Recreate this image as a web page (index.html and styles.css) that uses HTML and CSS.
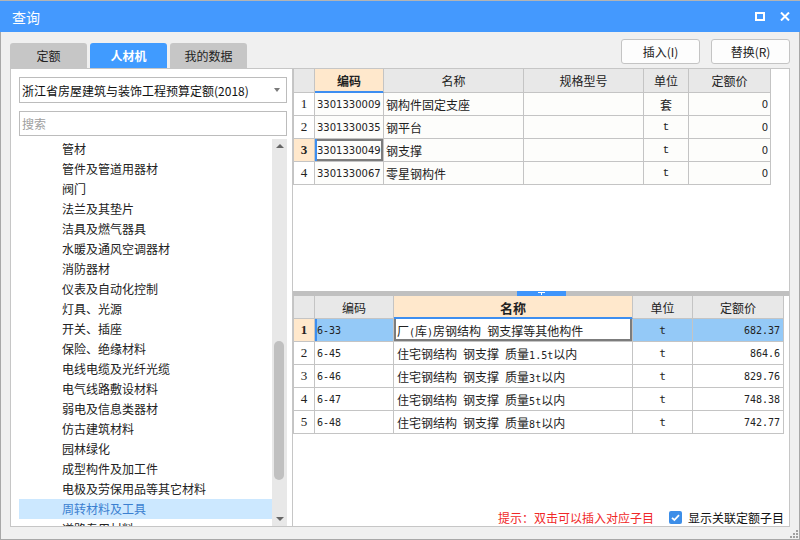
FILE: index.html
```html
<!DOCTYPE html>
<html>
<head>
<meta charset="utf-8">
<title>查询</title>
<link rel="stylesheet" href="styles.css">
</head>
<body>
<div class="win">
  <div class="titlebar">
    <span class="title">查询</span>
    <span class="tb-icons">
      <svg width="10" height="9" viewBox="0 0 10 9"><rect x="1" y="1" width="8" height="7" fill="none" stroke="#fff" stroke-width="2"/></svg>
      <svg width="10" height="9" viewBox="0 0 10 9"><path d="M1 0.5 L9 8.5 M9 0.5 L1 8.5" stroke="#fff" stroke-width="2" fill="none"/></svg>
    </span>
  </div>
  <div class="body">
    <div class="toolbar">
      <div class="tabs">
        <div class="tab">定额</div>
        <div class="tab active">人材机</div>
        <div class="tab">我的数据</div>
      </div>
      <div class="buttons">
        <button class="btn">插入(I)</button>
        <button class="btn">替换(R)</button>
      </div>
    </div>
    <div class="main">
      <div class="left">
        <div class="select"><span class="select-text">浙江省房屋建筑与装饰工程预算定额(2018)</span><span class="caret"></span></div>
        <div class="search">搜索</div>
        <div class="tree">
          <div class="items">
            <div class="item">管材</div>
            <div class="item">管件及管道用器材</div>
            <div class="item">阀门</div>
            <div class="item">法兰及其垫片</div>
            <div class="item">洁具及燃气器具</div>
            <div class="item">水暖及通风空调器材</div>
            <div class="item">消防器材</div>
            <div class="item">仪表及自动化控制</div>
            <div class="item">灯具、光源</div>
            <div class="item">开关、插座</div>
            <div class="item">保险、绝缘材料</div>
            <div class="item">电线电缆及光纤光缆</div>
            <div class="item">电气线路敷设材料</div>
            <div class="item">弱电及信息类器材</div>
            <div class="item">仿古建筑材料</div>
            <div class="item">园林绿化</div>
            <div class="item">成型构件及加工件</div>
            <div class="item">电极及劳保用品等其它材料</div>
            <div class="item sel">周转材料及工具</div>
            <div class="item">道路专用材料</div>
          </div>
          <div class="vscroll">
            <div class="arrow"><span class="tri-up"></span></div>
            <div class="track"><div class="thumb"></div></div>
            <div class="arrow"><span class="tri-down"></span></div>
          </div>
        </div>
      </div>
      <div class="right">
        <div class="top-area">
          <div class="grid g1">
            <div class="c hd"></div>
            <div class="c hd peach bold cur-col">编码</div>
            <div class="c hd">名称</div>
            <div class="c hd">规格型号</div>
            <div class="c hd">单位</div>
            <div class="c hd">定额价</div>

            <div class="c num">1</div>
            <div class="c code">3301330009</div>
            <div class="c name">钢构件固定支座</div>
            <div class="c"></div>
            <div class="c unit">套</div>
            <div class="c price">0</div>

            <div class="c num">2</div>
            <div class="c code">3301330035</div>
            <div class="c name">钢平台</div>
            <div class="c"></div>
            <div class="c unit mono">t</div>
            <div class="c price">0</div>

            <div class="c num peach bold">3</div>
            <div class="c code focus-row">3301330049</div>
            <div class="c name">钢支撑</div>
            <div class="c"></div>
            <div class="c unit mono">t</div>
            <div class="c price">0</div>

            <div class="c num">4</div>
            <div class="c code">3301330067</div>
            <div class="c name">零星钢构件</div>
            <div class="c"></div>
            <div class="c unit mono">t</div>
            <div class="c price">0</div>
          </div>
        </div>
        <div class="splitter">
          <div class="handle"><svg width="7" height="3" viewBox="0 0 7 3"><rect x="0" y="0" width="7" height="1" fill="#fff"/><rect x="3" y="1" width="1" height="2" fill="#fff"/></svg></div>
        </div>
        <div class="bottom-area">
          <div class="grid g2">
            <div class="c hd"></div>
            <div class="c hd">编码</div>
            <div class="c hd peach bold big cur-col">名称</div>
            <div class="c hd">单位</div>
            <div class="c hd">定额价</div>

            <div class="c num peach bold">1</div>
            <div class="c code2 blue row-ind">6-33</div>
            <div class="c name2 focus-b"><span>厂<span class="lat">(</span>库<span class="lat">)</span>房钢结构<span class="lat"> </span>钢支撑等其他构件</span></div>
            <div class="c unit2 blue">t</div>
            <div class="c price2 blue">682.37</div>

            <div class="c num">2</div>
            <div class="c code2">6-45</div>
            <div class="c name2"><span>住宅钢结构<span class="lat"> </span>钢支撑<span class="lat"> </span>质量<span class="lat">1.5t</span>以内</span></div>
            <div class="c unit2">t</div>
            <div class="c price2">864.6</div>

            <div class="c num">3</div>
            <div class="c code2">6-46</div>
            <div class="c name2"><span>住宅钢结构<span class="lat"> </span>钢支撑<span class="lat"> </span>质量<span class="lat">3t</span>以内</span></div>
            <div class="c unit2">t</div>
            <div class="c price2">829.76</div>

            <div class="c num">4</div>
            <div class="c code2">6-47</div>
            <div class="c name2"><span>住宅钢结构<span class="lat"> </span>钢支撑<span class="lat"> </span>质量<span class="lat">5t</span>以内</span></div>
            <div class="c unit2">t</div>
            <div class="c price2">748.38</div>

            <div class="c num">5</div>
            <div class="c code2">6-48</div>
            <div class="c name2"><span>住宅钢结构<span class="lat"> </span>钢支撑<span class="lat"> </span>质量<span class="lat">8t</span>以内</span></div>
            <div class="c unit2">t</div>
            <div class="c price2">742.77</div>
          </div>
          <div class="status">
            <span class="hint">提示：双击可以插入对应子目</span>
            <svg class="check" width="13" height="13" viewBox="0 0 13 13"><rect x="0" y="0" width="13" height="13" rx="2" fill="#3d8ee8"/><path d="M3 6.8 L5.4 9 L10 4.2" fill="none" stroke="#fff" stroke-width="1.8"/></svg>
            <span class="chk-label">显示关联定额子目</span>
          </div>
        </div>
      </div>
    </div>
    <svg class="grip" width="8" height="8" viewBox="0 0 8 8">
      <rect x="6" y="0" width="2" height="2" fill="#a0a0a0"/>
      <rect x="3" y="3" width="2" height="2" fill="#a0a0a0"/>
      <rect x="6" y="3" width="2" height="2" fill="#a0a0a0"/>
      <rect x="0" y="6" width="2" height="2" fill="#a0a0a0"/>
      <rect x="3" y="6" width="2" height="2" fill="#a0a0a0"/>
      <rect x="6" y="6" width="2" height="2" fill="#a0a0a0"/>
    </svg>
  </div>
</div>
</body>
</html>
```

FILE: styles.css
```css
* { box-sizing: border-box; }
html, body { margin: 0; padding: 0; }
body {
  width: 800px;
  height: 540px;
  overflow: hidden;
  font-family: "Noto Sans CJK SC", "Microsoft YaHei", sans-serif;
  font-size: 12px;
  color: #222;
  background: #f0f0f0;
}
.win { width: 800px; height: 540px; display: flex; flex-direction: column; }

.titlebar {
  height: 32px;
  flex: none;
  background: #4499fe;
  border-top: 1px solid #b4b4b4;
  display: flex;
  align-items: center;
  padding: 0 10px 0 12px;
  color: #fff;
}
.title { font-size: 14px; line-height: 18px; }
.tb-icons { margin-left: auto; display: flex; align-items: center; gap: 15px; }
.tb-icons svg { display: block; }

.body {
  flex: 1;
  border: 1px solid #a8a8a8;
  border-top: none;
  display: flex;
  flex-direction: column;
  background: #f0f0f0;
  position: relative;
}

.toolbar { height: 36px; flex: none; display: flex; justify-content: space-between; padding: 0 9px; }
.tabs { display: flex; gap: 3px; align-self: flex-end; }
.tab {
  width: 77px;
  height: 25px;
  line-height: 25px;
  text-align: center;
  background: #c6c6c6;
  border-radius: 3px 3px 0 0;
  color: #222;
}
.tab.active { background: #409bff; color: #fff; font-weight: bold; }
.buttons { display: flex; gap: 11px; padding-top: 7px; }
.btn {
  width: 79px;
  height: 25px;
  border: 1px solid #c4c4c4;
  border-radius: 3px;
  background: #fdfdfd;
  font: inherit;
  color: #222;
  padding: 0;
}

.main { height: 459px; flex: none; display: flex; padding: 0 9px; }

.left {
  width: 283px;
  flex: none;
  border: 1px solid #c6c6c6;
  background: #fff;
  display: flex;
  flex-direction: column;
  padding: 8px 5px 0 8px;
}
.select {
  height: 26px;
  flex: none;
  border: 1px solid #bcbcbc;
  display: flex;
  align-items: center;
  padding-left: 2px;
  color: #111;
}
.select-text { flex: 1; white-space: nowrap; }
.caret {
  width: 0; height: 0;
  border-left: 3.5px solid transparent;
  border-right: 3.5px solid transparent;
  border-top: 4px solid #7a7a7a;
  margin-right: 6px;
}
.search {
  height: 25px;
  flex: none;
  margin-top: 8px;
  border: 1px solid #bcbcbc;
  padding-left: 2px;
  line-height: 23px;
  color: #a0a0a0;
}
.tree { flex: 1; margin-top: 3px; display: flex; overflow: hidden; min-height: 0; }
.items { flex: 1; overflow: hidden; }
.item { height: 20px; line-height: 20px; padding-left: 43px; white-space: nowrap; color: #222; }
.item.sel { background: #cce8ff; color: #3b7fd0; }
.vscroll { width: 15px; flex: none; background: #e8e8e8; display: flex; flex-direction: column; }
.arrow { height: 14px; flex: none; display: flex; align-items: center; justify-content: center; }
.tri-up, .tri-down { width: 0; height: 0; border-left: 4px solid transparent; border-right: 4px solid transparent; }
.tri-up { border-bottom: 4px solid #666; }
.tri-down { border-top: 4px solid #666; }
.track { flex: 1; }
.thumb { width: 10px; height: 139px; margin: 188px 0 0 2px; background: #c0c0c0; border-radius: 5px; }

.right {
  flex: 1;
  border: 1px solid #c6c6c6;
  border-left: none;
  background: #fff;
  display: flex;
  flex-direction: column;
}
.top-area { height: 222px; flex: none; }
.splitter {
  height: 5px;
  flex: none;
  background: #c0c0c0;
  display: flex;
  justify-content: center;
}
.handle { width: 49px; height: 5px; background: #3f95fb; display: flex; justify-content: center; padding-top: 1px; }
.handle svg { display: block; }
.bottom-area { flex: 1; display: flex; flex-direction: column; }

.grid { display: grid; border-left: 1px solid #c4c4c4; }
.g1 { grid-template-columns: 21px 69px 140px 120px 45px 82px; grid-template-rows: 24px; grid-auto-rows: 23px; width: 478px; }
.g2 { grid-template-columns: 21px 79px 239px 60px 91px; grid-auto-rows: 23px; width: 491px; }
.c {
  border-right: 1px solid #c4c4c4;
  border-bottom: 1px solid #c4c4c4;
  display: flex;
  align-items: center;
  white-space: nowrap;
  overflow: hidden;
  background: #fdfdfb;
}
.hd { background: #e8e8e8; justify-content: center; color: #222; }
.peach { background: #ffe8cc; }
.bold { font-weight: bold; }
.big { font-size: 13px; }
.cur-col { border-bottom-color: #3d8ef0; box-shadow: inset 0 -1px 0 #3d8ef0; }
.num { justify-content: center; background: #fff; font-family: "Liberation Serif", serif; font-size: 13px; }
.num.peach { background: #ffe8cc; }
.code { padding-left: 2px; font-family: "DejaVu Sans", sans-serif; font-size: 10px; }
.name { padding-left: 2px; }
.unit { justify-content: center; }
.mono { font-family: "Liberation Mono", monospace; font-size: 11px; }
.price { justify-content: flex-end; padding-right: 2px; font-family: "DejaVu Sans", sans-serif; font-size: 10px; }
.focus-row { box-shadow: inset 2px 0 0 #3d8ef0, inset 0 0 0 2px #7c7c7c; }

.g2 .c { background: #fff; }
.g2 .hd { background: #e8e8e8; }
.g2 .peach { background: #ffe8cc; }
.code2 { padding-left: 2px; font-family: "DejaVu Sans Mono", monospace; font-size: 10px; }
.name2 { padding-left: 3px; font-size: 12px; }
.lat { font-family: "DejaVu Sans Mono", monospace; font-size: 10px; white-space: pre; }
.unit2 { justify-content: center; font-family: "DejaVu Sans Mono", monospace; font-size: 11px; }
.price2 { justify-content: flex-end; padding-right: 3px; font-family: "DejaVu Sans Mono", monospace; font-size: 10px; }
.g2 .blue { background: #94c9f7; }
.row-ind { box-shadow: inset 2px 0 0 #3d8ef0; }
.focus-b { box-shadow: inset 2px 0 0 #7c7c7c, inset -2px 0 0 #7c7c7c, inset 0 -2px 0 #7c7c7c; }

.status {
  margin-top: auto;
  height: 17px;
  flex: none;
  display: flex;
  align-items: center;
  justify-content: flex-end;
  padding-right: 5px;
}
.hint { color: #f02828; }
.check { display: block; margin-left: 15px; }
.chk-label { margin-left: 6px; color: #111; }

.grip { position: absolute; right: 1px; bottom: 1px; display: block; }
```
